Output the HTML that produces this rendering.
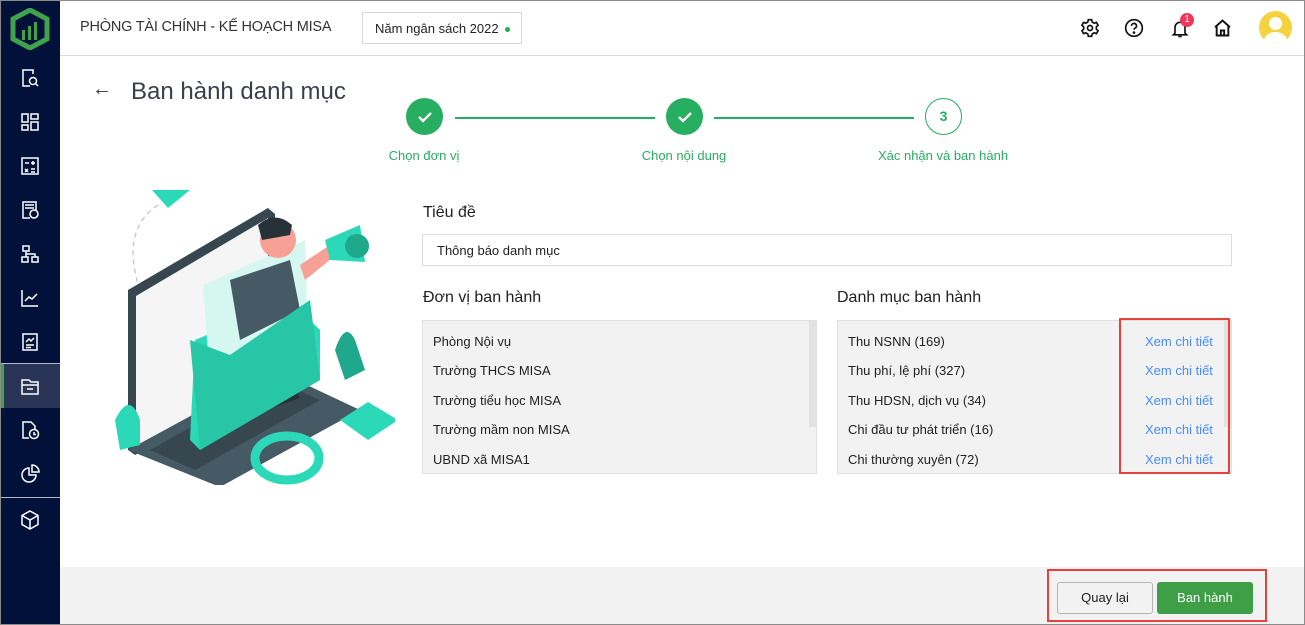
<!DOCTYPE html>
<html><head><meta charset="utf-8"><style>
*{box-sizing:border-box;margin:0;padding:0}
body{width:1305px;height:625px;overflow:hidden;font-family:"Liberation Sans",Arial,sans-serif;background:#fff;position:relative;color:#212121}
.abs{position:absolute}
#frame{position:absolute;left:0;top:0;width:1305px;height:625px;border:1px solid #8a8a8a;pointer-events:none;z-index:10}
#side{left:0;top:0;width:60px;height:625px;background:#011139}
#hdr{left:60px;top:0;width:1245px;height:56px;border-bottom:1px solid #dcdcdc;background:#fff}
.ico{position:absolute;left:20px;width:20px;height:20px}
.step{position:absolute;width:37px;height:37px;border-radius:50%;background:#27ae60;top:98px}
.lbl{position:absolute;top:148px;font-size:13px;color:#27ae60;transform:translateX(-50%);white-space:nowrap}
.line{position:absolute;top:117px;height:2px;background:#27ae60}
.box{position:absolute;top:320px;width:395px;height:154px;background:#f2f2f2;border:1px solid #e0e0e0}
.row{position:absolute;left:10px;font-size:13px;color:#212121}
.lnk{position:absolute;left:307px;font-size:13px;color:#4a8cf7}
.sec{position:absolute;font-size:16px;color:#212121;top:289px}
</style></head><body>
<div id="side" class="abs">
<svg class="abs" style="left:10px;top:8px" width="40" height="42" viewBox="0 0 40 42"><path d="M20 2 L37 11 L37 31 L20 40 L3 31 L3 11 Z" fill="none" stroke="#3fa34d" stroke-width="5"/><rect x="12" y="22" width="3" height="10" fill="#3fa34d"/><rect x="18" y="18" width="3" height="14" fill="#3fa34d"/><rect x="24" y="14" width="3" height="18" fill="#3fa34d"/></svg>
<svg class="ico" style="top:68px" viewBox="0 0 20 20" fill="none" stroke="#fff" stroke-width="1.5"><path d="M13 6V2H3v16h7"/><circle cx="13" cy="13" r="3.5"/><path d="M15.5 15.5L18 18"/></svg>
<svg class="ico" style="top:112px" viewBox="0 0 20 20" fill="none" stroke="#fff" stroke-width="1.5"><rect x="2" y="2" width="6" height="8"/><rect x="11" y="2" width="7" height="5"/><rect x="2" y="13" width="6" height="5"/><rect x="11" y="10" width="7" height="8"/></svg>
<svg class="ico" style="top:156px" viewBox="0 0 20 20" fill="none" stroke="#fff" stroke-width="1.5"><rect x="2" y="2" width="16" height="16"/><path d="M5 7h4M13 5v4M11 7h4M5 13l3 3M8 13l-3 3M11 13h4M11 16h4"/></svg>
<svg class="ico" style="top:200px" viewBox="0 0 20 20" fill="none" stroke="#fff" stroke-width="1.5"><path d="M10 18H3V2h13v8"/><path d="M5 5h9M5 8h9"/><circle cx="14" cy="14" r="4"/></svg>
<svg class="ico" style="top:244px" viewBox="0 0 20 20" fill="none" stroke="#fff" stroke-width="1.5"><rect x="3" y="2" width="6" height="5"/><rect x="2" y="13" width="6" height="5"/><rect x="12" y="13" width="6" height="5"/><path d="M6 7v6M6 10h9v3"/></svg>
<svg class="ico" style="top:288px" viewBox="0 0 20 20" fill="none" stroke="#fff" stroke-width="1.5"><path d="M2 2v16h16M5 13l4-4 3 2 5-5"/></svg>
<svg class="ico" style="top:332px" viewBox="0 0 20 20" fill="none" stroke="#fff" stroke-width="1.5"><rect x="3" y="2" width="14" height="16"/><path d="M6 10l3-3 2 2 3-3M6 13h8M6 15.5h5"/></svg>
<div class="abs" style="left:0;top:363px;width:60px;height:1px;background:#fff;opacity:.7"></div>
<div class="abs" style="left:0;top:364px;width:60px;height:44px;background:#293556"></div>
<div class="abs" style="left:0;top:364px;width:4px;height:44px;background:#3fa34d"></div>
<svg class="ico" style="top:376px" viewBox="0 0 20 20" fill="none" stroke="#fff" stroke-width="1.5"><path d="M2 4h7l2 2h7v12H2z"/><path d="M2 9h16M7 13h6"/></svg>
<svg class="ico" style="top:420px" viewBox="0 0 20 20" fill="none" stroke="#fff" stroke-width="1.5"><path d="M9 18H3V2h8l4 4v4"/><circle cx="14" cy="14" r="4.5"/><path d="M14 12v2.5h2"/></svg>
<svg class="ico" style="top:464px" viewBox="0 0 20 20" fill="none" stroke="#fff" stroke-width="1.5"><path d="M9 4a7 7 0 1 0 7 7H9z"/><path d="M12 1a7 7 0 0 1 7 7h-7z"/></svg>
<div class="abs" style="left:0;top:497px;width:60px;height:1px;background:#fff;opacity:.7"></div>
<svg class="ico" style="top:510px" viewBox="0 0 20 20" fill="none" stroke="#fff" stroke-width="1.5"><path d="M10 1l8 4.5v9L10 19l-8-4.5v-9z"/><path d="M2 5.5l8 4.5 8-4.5M10 10v9"/></svg>
</div>
<div id="hdr" class="abs">
<div class="abs" style="left:20px;top:19px;font-size:14.5px;color:#333;letter-spacing:-0.2px">PHÒNG TÀI CHÍNH - KẾ HOẠCH MISA</div>
<div class="abs" style="left:302px;top:12px;width:160px;height:32px;border:1px solid #d8d8d8;font-size:13px;color:#222;padding:8px 0 0 12px">Năm ngân sách 2022 <span style="display:inline-block;width:5px;height:5px;border-radius:50%;background:#22b14c;vertical-align:middle;margin-left:3px"></span></div>
<svg class="abs" style="left:1020px;top:18px" width="20" height="20" viewBox="0 0 24 24" fill="none" stroke="#111" stroke-width="2"><circle cx="12" cy="12" r="3"/><path d="M10 2h4l.6 2.8 2.4 1.4 2.7-.9 2 3.4-2.1 1.9v2.8l2.1 1.9-2 3.4-2.7-.9-2.4 1.4L14 22h-4l-.6-2.8-2.4-1.4-2.7.9-2-3.4 2.1-1.9v-2.8L2.3 8.7l2-3.4 2.7.9 2.4-1.4z"/></svg>
<svg class="abs" style="left:1064px;top:18px" width="20" height="20" viewBox="0 0 24 24" fill="none" stroke="#111" stroke-width="2"><circle cx="12" cy="12" r="10"/><path d="M9 9.5a3 3 0 1 1 4 2.8c-.8.4-1 1-1 1.7"/><circle cx="12" cy="17.5" r=".6" fill="#111"/></svg>
<svg class="abs" style="left:1110px;top:19px" width="20" height="20" viewBox="0 0 24 24" fill="none" stroke="#111" stroke-width="2"><path d="M6 17V10a6 6 0 0 1 12 0v7l2 2H4z"/><path d="M10 21h4"/></svg>
<div class="abs" style="left:1120px;top:13px;width:14px;height:14px;border-radius:50%;background:#f0365a;color:#fff;font-size:10px;text-align:center;line-height:14px">1</div>
<svg class="abs" style="left:1152px;top:18px" width="21" height="20" viewBox="0 0 24 24" fill="none" stroke="#111" stroke-width="2.3"><path d="M3 11L12 3l9 8M5 9v12h14V9"/><path d="M10 21v-6h4v6"/></svg>
<div class="abs" style="left:1199px;top:11px;width:33px;height:33px;border-radius:50%;background:#f5d33f;overflow:hidden"><div class="abs" style="left:10px;top:6px;width:13px;height:13px;border-radius:50%;background:#fff"></div><div class="abs" style="left:5px;top:21px;width:23px;height:18px;border-radius:50%;background:#fff"></div></div>
</div>
<div class="abs" style="left:92px;top:78px;font-size:20px;color:#333">←</div>
<div class="abs" style="left:131px;top:78px;font-size:24px;color:#3a3f4a">Ban hành danh mục</div>
<div class="step" style="left:406px"><svg width="37" height="37" viewBox="0 0 37 37"><path d="M13 19l4 4 8-8" fill="none" stroke="#fff" stroke-width="2.3"/></svg></div>
<div class="line" style="left:455px;width:200px"></div>
<div class="step" style="left:666px"><svg width="37" height="37" viewBox="0 0 37 37"><path d="M13 19l4 4 8-8" fill="none" stroke="#fff" stroke-width="2.3"/></svg></div>
<div class="line" style="left:714px;width:200px"></div>
<div class="step" style="left:925px;background:#fff;border:1.5px solid #27ae60;color:#27ae60;text-align:center;line-height:34px;font-size:14px;font-weight:bold">3</div>
<div class="lbl" style="left:424px">Chọn đơn vị</div>
<div class="lbl" style="left:684px">Chọn nội dung</div>
<div class="lbl" style="left:943px">Xác nhận và ban hành</div>
<svg class="abs" style="left:105px;top:185px" width="290" height="300" viewBox="105 185 290 300">
<path d="M158 205 Q120 230 140 290 Q150 300 170 310" fill="none" stroke="#ccc" stroke-width="1.5" stroke-dasharray="5 4"/>
<path d="M152 190 L190 190 L168 208 Z" fill="#2bd9b9"/>
<path d="M128 290 L268 208 L275 214 L275 380 L135 455 L128 450Z" fill="#37474f"/>
<path d="M136 296 L268 218 L268 372 L136 448Z" fill="#f5f5f5"/>
<path d="M128 450 L275 370 L360 410 L220 487 Z" fill="#455a64"/>
<path d="M150 450 L275 380 L320 400 L195 470Z" fill="#37474f"/>
<path d="M248 390 L295 385 L300 398 L252 415Z" fill="#263238"/>
<path d="M195 340 L290 300 L320 330 L320 380 L200 450 L190 440Z" fill="#2bd9b9"/>
<path d="M203 285 L305 240 L308 340 L210 380Z" fill="#d5f7f0"/>
<circle cx="278" cy="240" r="18" fill="#f7a095"/>
<path d="M258 225 Q275 210 292 225 L290 235 L262 240Z" fill="#263238"/>
<path d="M230 280 L290 260 L300 310 L240 340Z" fill="#455a64"/>
<path d="M190 340 L230 355 L310 300 L320 380 L200 450Z" fill="#26c6a6"/>
<path d="M300 265 L330 245 L336 255 L305 280Z" fill="#f7a095"/>
<path d="M325 240 L360 225 L365 262 L330 260Z" fill="#2bd9b9"/>
<circle cx="357" cy="246" r="12" fill="#1fa88c"/>
<path d="M340 420 L368 402 L398 420 L368 440Z" fill="#2bd9b9"/>
<ellipse cx="287" cy="458" rx="32" ry="22" fill="none" stroke="#2bd9b9" stroke-width="9"/>
<path d="M115 420 Q130 390 140 420 L140 445 L120 450Z" fill="#2bd9b9"/>
<path d="M335 350 Q345 320 355 340 L365 370 L345 380Z" fill="#1fa88c"/>
</svg>
<div class="abs" style="left:423px;top:204px;font-size:16px">Tiêu đề</div>
<div class="abs" style="left:422px;top:234px;width:810px;height:32px;border:1px solid #dcdcdc;font-size:13px;padding:8px 0 0 14px">Thông báo danh mục</div>
<div class="sec" style="left:423px">Đơn vị ban hành</div>
<div class="sec" style="left:837px">Danh mục ban hành</div>
<div class="box" style="left:422px"><div class="abs" style="left:386px;top:0;width:7px;height:106px;background:#e2e2e2"></div>
<div class="row" style="top:13px">Phòng Nội vụ</div><div class="row" style="top:42px">Trường THCS MISA</div><div class="row" style="top:72px">Trường tiểu học MISA</div><div class="row" style="top:101px">Trường mầm non MISA</div><div class="row" style="top:131px">UBND xã MISA1</div></div>
<div class="box" style="left:837px"><div class="abs" style="left:386px;top:0;width:7px;height:106px;background:#e2e2e2"></div>
<div class="row" style="top:13px">Thu NSNN (169)</div><div class="row" style="top:42px">Thu phí, lệ phí (327)</div><div class="row" style="top:72px">Thu HDSN, dịch vụ (34)</div><div class="row" style="top:101px">Chi đầu tư phát triển (16)</div><div class="row" style="top:131px">Chi thường xuyên (72)</div>
<div class="lnk" style="top:13px">Xem chi tiết</div><div class="lnk" style="top:42px">Xem chi tiết</div><div class="lnk" style="top:72px">Xem chi tiết</div><div class="lnk" style="top:101px">Xem chi tiết</div><div class="lnk" style="top:131px">Xem chi tiết</div></div>
<div class="abs" style="left:1119px;top:318px;width:111px;height:156px;border:2px solid #e8413c"></div>
<div class="abs" style="left:60px;top:567px;width:1245px;height:58px;background:#f2f2f2"></div>
<div class="abs" style="left:1057px;top:582px;width:96px;height:32px;border:1px solid #b5b5b5;border-radius:3px;background:#f2f2f2;font-size:13px;text-align:center;line-height:30px">Quay lại</div>
<div class="abs" style="left:1157px;top:582px;width:96px;height:32px;border-radius:3px;background:#3f9f47;color:#fff;font-size:13px;text-align:center;line-height:32px">Ban hành</div>
<div class="abs" style="left:1047px;top:569px;width:220px;height:53px;border:2px solid #e8413c"></div>
<div id="frame"></div>
</body></html>
